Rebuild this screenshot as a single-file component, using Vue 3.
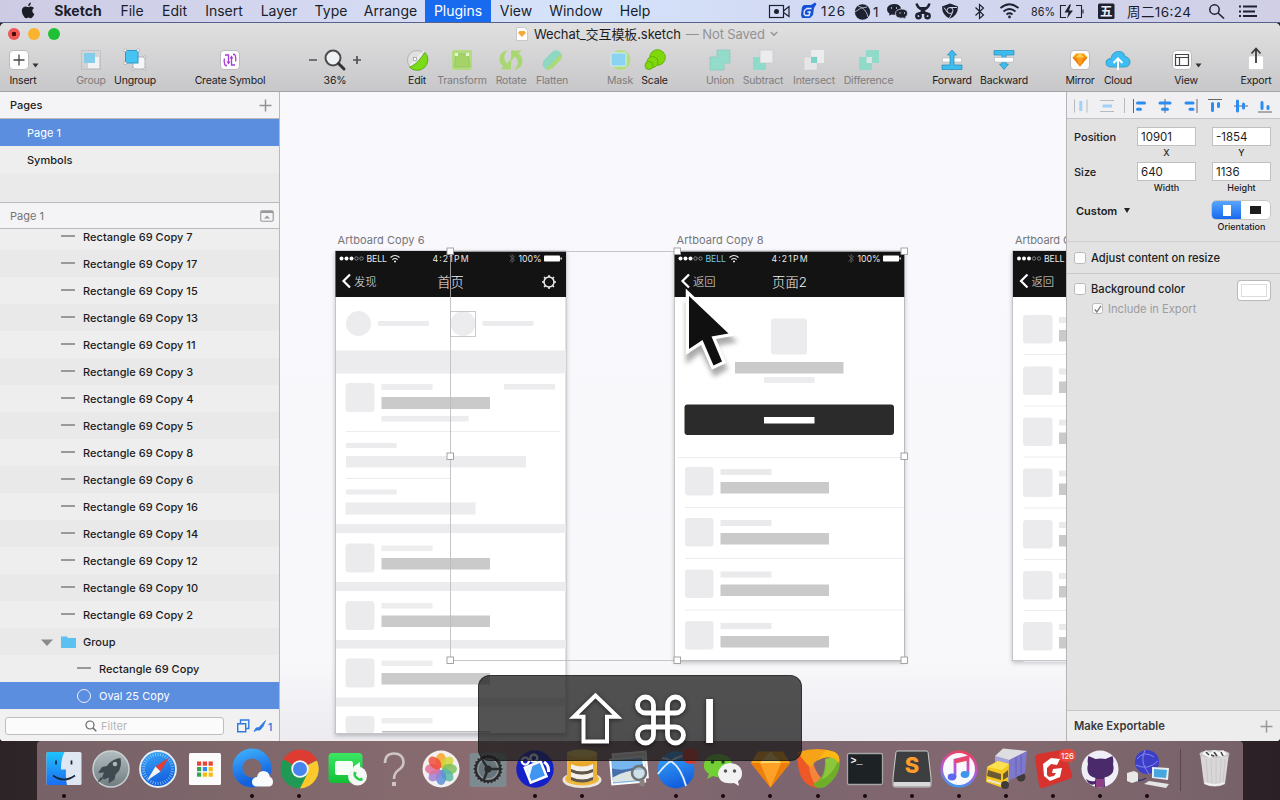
<script setup>
const menus = ['Sketch', 'File', 'Edit', 'Insert', 'Layer', 'Type', 'Arrange', 'Plugins', 'View', 'Window', 'Help']

const tile = '<rect x="5.5" y="5.5" width="19" height="19" rx="3.5" fill="#fdfdfd" stroke="#bcbcbe"/>'
const tools = [
  { label: 'Insert', icon: `<g transform="translate(-4 0)">${tile}<path d="M15 9.5v11M9.5 15h11" stroke="#444" stroke-width="1.3"/></g><path d="M24.500 18.500h6l-3 4z" fill="#333"/>` },
  {},
  { label: 'Group', dim: true, icon: '<rect x="5.500" y="5.500" width="19" height="19" fill="none" stroke="#b9b9bd" stroke-dasharray="2 1"/><rect x="12" y="12" width="11" height="11" fill="#f2f2f4"/><rect x="8" y="8" width="11" height="10" fill="#84cdea"/>' },
  { label: 'Ungroup', icon: '<rect x="13" y="12" width="12" height="12" fill="#f6f6f8" stroke="#b4b4b8"/><rect x="5.500" y="5.500" width="12.500" height="12.500" fill="#45c4f4" stroke="#2f99c9"/><path d="M4 4h2.500v2.500H4zM17 4h2.500v2.500H17zM4 17h2.500v2.500H4zM24 11h2v2h-2zM24 23h2v2h-2zM12 23h2v2h-2z" fill="#fff" stroke="#999" stroke-width=".5"/>' },
  {},
  { label: 'Create Symbol', icon: `${tile}<path d="M10 10h3.500v8M12 20.500h-1.500c-1.500-1-1.500-6-1-7M20 20h-3.500v-8M18 9.500h1.500c1.500 1 1.500 6 1 7" fill="none" stroke="#a53bd8" stroke-width="1.300"/><path d="M11.500 16.500h4l-2 3zM14.500 13.500h4l-2-3z" fill="#a53bd8"/>` },
  {},
  { label: '36%', icon: '<circle cx="13" cy="13" r="7.500" fill="#eef2f5" stroke="#4b4b4d" stroke-width="2"/><path d="M18.500 18.500l5.500 5.500" stroke="#333" stroke-width="3" stroke-linecap="round"/><path d="M-11 15h8M33 15h8M37 11v8" stroke="#505052" stroke-width="1.700"/>' },
  {},
  { label: 'Edit', icon: '<circle cx="15" cy="15" r="9.500" fill="#e0e0e0" stroke="#aaa" stroke-width=".8"/><path d="M23 7.500A10 10 0 0 1 7.500 22C14.500 20 18 14 23 7.500z" fill="#79dc17" stroke="#4aa510" stroke-width=".8"/><path d="M8 21L22 6" stroke="#fff" stroke-width="1"/><rect x="11.500" y="12.500" width="3" height="3" fill="#fff" stroke="#888" stroke-width=".6"/>' },
  { label: 'Transform', dim: true, icon: '<rect x="5" y="5" width="20" height="20" rx="2" fill="#b3dc81"/><path d="M9 9l-2 13h16L21 9z" fill="#a4d467" stroke="#98c966"/><path d="M8 8h3v3H8zM19 8h3v3h-3z" fill="#e7f5d5"/>' },
  { label: 'Rotate', dim: true, icon: '<path d="M12 5Q3 7 3.500 15q.5 4 4 6.500l-3 3H15V14l-4 4.500Q5 12 12 5zM18 25q9-2 8.500-10-.5-4-4-6.500l3-3H15V16l4-4.500Q25 18 18 25z" fill="#a9d873"/>' },
  { label: 'Flatten', dim: true, icon: '<path d="M7 15L16 6q4-2 7 1t1 7l-9 9q-4 3-7.500 0T7 15z" fill="#8fd7c3"/><path d="M24 9q2 3-.5 6l-8.500 8.500q-4 2-6 .5L24 9z" fill="#acda73"/>' },
  {},
  { label: 'Mask', dim: true, icon: '<circle cx="15.500" cy="15" r="10" fill="#b2dd80"/><rect x="6" y="8" width="15" height="13" rx="1" fill="#8ad3f2" stroke="#d8edf5"/>' },
  { label: 'Scale', icon: '<g fill="#80d80b" stroke="#5fb30b" stroke-width="1"><circle cx="17.500" cy="12.500" r="7.800"/><circle cx="12.500" cy="17" r="5.500"/><circle cx="9" cy="20.500" r="4"/></g>' },
  {},
  { label: 'Union', dim: true, icon: '<path d="M12 5h13v13h-6v7H5V12h7z" fill="#93dccb" stroke="#85c9ba" stroke-width=".7"/>' },
  { label: 'Subtract', dim: true, icon: '<rect x="12" y="5" width="13" height="13" fill="#ececee" stroke="#cfcfcf"/><path d="M5 12h7v6h6v7H5z" fill="#8edacb"/>' },
  { label: 'Intersect', dim: true, icon: '<rect x="12" y="5" width="13" height="13" fill="#ececee"/><rect x="5" y="12" width="13" height="13" fill="#e6e6e9" stroke="#ccc" stroke-width=".5"/><rect x="12" y="12" width="6" height="6" fill="#7cd2c4"/>' },
  { label: 'Difference', dim: true, icon: '<path d="M12 5h13v13h-7v7H5V12h7z" fill="#91dac9"/><rect x="12.500" y="12" width="5.500" height="6" fill="#dce5e3"/>' },
  {},
  { label: 'Forward', icon: '<rect x="5.500" y="13" width="19" height="4" fill="#fff" stroke="#aaa" stroke-width=".5"/><path d="M15 5l4.500 5H17v10h8v4.500H5V20h8V10h-2.500z" fill="#3cbdf0" stroke="#2789b4" stroke-width=".7"/>' },
  { label: 'Backward', icon: '<path d="M5 5.500h20v4.500h-8v9h2.500L15 24.500 10.500 19H13v-9H5z" fill="#3cbdf0" stroke="#2789b4" stroke-width=".7"/><rect x="5.500" y="12.500" width="19" height="4.500" fill="#fff" stroke="#aaa" stroke-width=".5"/>' },
  {},
  { label: 'Mirror', icon: `${tile}<path d="M11 8.500h8l3.500 4L15 21.500 7.500 12.500z" fill="#f7a414"/><path d="M7.500 12.500h15L15 21.500z" fill="#ea7b09"/><path d="M11 12.500h8L15 21.500z" fill="#fb9b1b"/><path d="M15 8.500l4 4h-8z" fill="#ffd14f"/>` },
  { label: 'Cloud', icon: '<path d="M8 22q-5 0-5-4.200T8 13.500q1-6.500 7-7T22 11.500q5 1 5 5.500T22 22z" fill="#3dbdf1" stroke="#2b94c2" stroke-width=".8"/><path d="M15 25V14M10.500 18L15 13.500l4.500 4.500" fill="none" stroke="#fff" stroke-width="2"/>' },
  {},
  { label: 'View', icon: `<g transform="translate(-4 0)">${tile}<path d="M8.500 9.500h13v11h-13zM8.500 12.500h13M12.500 12.500v8" fill="none" stroke="#444" stroke-width="1.200"/></g><path d="M24.500 18.500h6l-3 4z" fill="#333"/>` },
  {},
  { label: 'Export', icon: '<path d="M7.500 11h15v13.500h-15z" fill="#fff" stroke="#c4c4c4" stroke-width=".6"/><path d="M15 18V4M10.500 8.500L15 3.500l4.500 5" fill="none" stroke="#3b3b3d" stroke-width="1.800"/>' },
]

const layers = [7, 17, 15, 13, 11, 3, 4, 5, 8, 6, 16, 14, 12, 10, 2].map(n => `Rectangle 69 Copy ${n}`)

const petals = ['#f6a623', '#d2d63a', '#7cc15a', '#58b9a3', '#5a8fdc', '#a07fd0', '#e2709a', '#ee4f3b']
  .map((c, i) => `<ellipse cx="20" cy="11.500" rx="5.200" ry="7.500" fill="${c}" fill-opacity=".85" transform="rotate(${i * 45} 20 20)"/>`).join('')
const teeth = Array.from({ length: 24 }, (_, i) => `<path d="M20 5.500v3" stroke="#292b2d" stroke-width="1.800" transform="rotate(${i * 15} 20 20)"/>`).join('')
const ticks = Array.from({ length: 36 }, (_, i) => `<path d="M20 4v3" stroke="#a9dcf8" stroke-width=".6" transform="rotate(${i * 10} 20 20)"/>`).join('')
const dots9 = ['#e94335', '#e94335', '#e94335', '#35a552', '#2d8ced', '#f9bb0c', '#35a552', '#f9bb0c', '#f9bb0c']
  .map((c, i) => `<rect x="${12 + (i % 3) * 5.800}" y="${12.500 + Math.floor(i / 3) * 5.500}" width="4.200" height="4.200" fill="${c}"/>`).join('')

const dock = [
  { run: true, art: '<rect x="2.500" y="3" width="35" height="33" rx="1.500" fill="#dfe7f2"/><path d="M4 3h16.500c-3 6-3.500 12-3.500 17.500h5c-.3 6 0 11 1 15.500H4q-1.500 0-1.500-1.500v-30Q2.500 3 4 3z" fill="url(#gFinder)"/><path d="M12 11.500v4M27.500 11.500v4" stroke="#14243a" stroke-width="1.700"/><path d="M9 26.500q11 8 22 0" fill="none" stroke="#14243a" stroke-width="1.600"/>' },
  { art: '<circle cx="20" cy="20" r="18" fill="url(#gSteel)" stroke="#c7d0d2" stroke-width="1.500"/><path d="M29.500 9q-9 1-13.500 8l-5 1-4 6 6-.5-2 5 2 2 5-2-.5 6 6-4 1-5q7-5 5-16.500z" fill="#3f4a50"/><circle cx="24" cy="15" r="2.300" fill="#aab5b7"/><path d="M10 28l-4 6 6-4" fill="#3f4a50"/>' },
  { art: `<circle cx="20" cy="20" r="18" fill="url(#gBlue)" stroke="#e7eef3" stroke-width="1.800"/>${ticks}<path d="M31 8.500L22.500 22.500 17.500 17.500z" fill="#e43d35"/><path d="M9 31.500l8.500-14 5 5z" fill="#f4f4f4"/>` },
  { art: `<rect x="4" y="4" width="32" height="32" rx="1.500" fill="#fbfbfb"/>${dots9}` },
  { run: true, art: '<circle cx="20" cy="19" r="14.500" fill="none" stroke="url(#gBlue)" stroke-width="10"/><path d="M25 37.500q-5 0-5-4.500t5-5q1-6 6.500-6t6.500 6q3 1 3 5t-4 4.500z" fill="#f8fafc"/>' },
  { run: true, art: '<path d="M20 20L3.200 10.300A19.400 19.400 0 0 1 36.800 10.300z" fill="#df3c31"/><path d="M20 20L3.200 10.300A19.400 19.400 0 0 0 20 39.400l8-14z" fill="#1f9a54"/><path d="M20 20L36.800 11.500A19.400 19.400 0 0 1 20 39.400l7.500-15z" fill="#fcc92d"/><path d="M20 11.500h17.400L36.800 10.300H20z" fill="#df3c31"/><circle cx="20" cy="20" r="8.700" fill="#f5f5f5"/><circle cx="20" cy="20" r="7" fill="#4685ed"/>' },
  { art: '<rect x="1.500" y="4" width="34" height="30" rx="4" fill="url(#gGreen)"/><rect x="8" y="12" width="18" height="14" rx="2.500" fill="#f6fff7"/><path d="M26 18l7-5v9z" fill="#f6fff7"/><circle cx="30.500" cy="27" r="9.500" fill="#f5f7f5"/><path d="M27 22.500l2.500 1-.5 3 3.500 3 2.500-1 1 2.500q-3 2.500-7-1t-2-7.500z" fill="#28cf4c"/>' },
  { art: '<path d="M11 14q0-9.500 9-9.500t9.500 8.500q0 5-5 8-4.500 3-4.500 9" fill="none" stroke="#ccc4c6" stroke-width="2.600"/><rect x="18" y="33" width="4" height="4" fill="#ccc4c6"/>' },
  { art: `<circle cx="20" cy="20" r="18.500" fill="#f3f0ef"/>${petals}` },
  { art: `<rect x="1.500" y="4" width="37" height="34" rx="2" fill="#7d8a90"/><circle cx="20" cy="20" r="15" fill="#8e9699"/>${teeth}<circle cx="20" cy="20" r="12.300" fill="none" stroke="#292b2d" stroke-width="2.500"/><circle cx="20" cy="20" r="9.500" fill="#67747a"/><circle cx="20" cy="20" r="3.500" fill="#292b2d"/><path d="M20 20L14 10M20 20l-4 10.500M20 20h12" stroke="#292b2d" stroke-width="2.400"/>` },
  { run: true, art: '<circle cx="20" cy="20" r="18.700" fill="#1420c8"/><g transform="rotate(-22 20 20)"><rect x="11" y="15" width="17" height="16" fill="#3f95ef" stroke="#fff" stroke-width="2.500"/><path d="M12 16h7l-7 9z" fill="#eef6ff"/><circle cx="14" cy="9" r="3.500" fill="#1420c8" stroke="#fff" stroke-width="2.300"/><circle cx="23" cy="9.500" r="3.500" fill="#1420c8" stroke="#fff" stroke-width="2.300"/></g><path d="M29 13q5 3 4.500 10" stroke="#fff" stroke-width="3" fill="none"/>' },
  { run: true, art: '<ellipse cx="20" cy="31" rx="19.500" ry="8" fill="#e9e5df"/><ellipse cx="20" cy="30" rx="17" ry="6.500" fill="#f1b93d"/><path d="M5 4h30v27q-15 8-30 0z" fill="#eeb43a"/><path d="M7 11q13 5 26 0v5q-13 5-26 0z" fill="#e9a92c"/><path d="M9 15q11 5 22 0v5q-11 5-22 0zM9 23q11 5 22 0v5q-11 5-22 0z" fill="#f3f1ee"/><path d="M9 20q11 5 22 0v3q-11 5-22 0zM9 28q11 5 22 0v3q-11 5-22 0z" fill="#5c5751"/><ellipse cx="20" cy="4.500" rx="15" ry="4" fill="#f8d162"/>' },
  { art: '<g transform="rotate(-5 20 20)"><rect x="5" y="4" width="33" height="26" fill="#ddd" stroke="#fff" stroke-width="2"/><rect x="2" y="9" width="33" height="25" fill="#77b6ee" stroke="#fff" stroke-width="2"/><path d="M3 18q14 5 31-2v16H3z" fill="#4a6ea8"/><path d="M3 27q15-7 31-5v10H3z" fill="#dce3e3"/></g><circle cx="30" cy="24" r="7" fill="#c7dfea" fill-opacity=".7" stroke="#707477" stroke-width="2.500"/><path d="M33 31v6" stroke="#8b8380" stroke-width="5"/>' },
  { run: true, art: '<circle cx="20" cy="21" r="18.500" fill="url(#gBlue)"/><path d="M6 9q17 2 24 28M2 25q12-17 29-19" fill="none" stroke="#e4efff" stroke-width="1.800"/><circle cx="34.500" cy="7" r="8" fill="#d63c32"/>' },
  { run: true, art: '<path d="M15 5q13 0 14 11 0 12-14 12-3 0-5-1l-6 3 2-5q-6-4-5-10Q3 5 15 5z" fill="#72d034"/><circle cx="9.500" cy="13" r="1.800" fill="#27491c"/><circle cx="20" cy="13" r="1.800" fill="#27491c"/><path d="M27 14q12 1 12 11 0 5-4 7l1 5-5-3q-15 2-16-9 1-10 12-11z" fill="#f2f2f2"/><circle cx="22.500" cy="22" r="1.700" fill="#555"/><circle cx="31.500" cy="22" r="1.700" fill="#555"/>' },
  { run: true, art: '<path d="M8 2.500h25L40 14 20.500 38.500 1 14z" fill="#f9a51b"/><path d="M1 14h39L20.500 38.500z" fill="#ef7d0b"/><path d="M10 14h21L20.500 38.500z" fill="#fda227"/><path d="M20.500 2.500L31 14H10z" fill="#ffd86b"/>' },
  { run: true, art: '<path d="M20 39Q7 38 2 25-2 12 0 3q9 8 15 10 2 10 9 17z" fill="#ee5826"/><path d="M20 39q-9-10-9-24l4-2q2 10 9 17z" fill="#f5853a"/><path d="M41 7q4 18-14 31-8 3-12-3Q28 29 27 10z" fill="#6fae2a"/><path d="M41 7q-3 17-18 24 6-9 4-21z" fill="#8cc63a"/><path d="M0 3q20-6 37 0 5 3 4 11-5-8-16-5-10 3-12 10Q5 12 0 3z" fill="#f6a318"/><path d="M28 1q8 1 11 4 3 3 2 9-4-6-12-6-8 1-11 6z" fill="#fdb813"/>' },
  { run: true, art: '<rect x="2.500" y="4.500" width="35" height="31" rx="1.500" fill="#1d2224" stroke="#a5a5a5" stroke-width="1.300"/><text x="5.500" y="15" font-family="Liberation Mono, monospace" font-weight="700" font-size="10" fill="#f4f4f4">&gt;_</text>' },
  { run: true, art: '<path d="M4 3q0-1 2-1h28q2 0 2 1l3 26v7q0 2-2 2H3q-2 0-2-2v-7z" fill="#3d3e40" stroke="#cbcbcb"/><path d="M1.500 33h37v3q0 1.500-2 1.500H3.500q-2 0-2-1.500z" fill="#d9d9d9"/><text x="20" y="24" text-anchor="middle" font-family="Inter, sans-serif" font-weight="800" font-size="22" fill="#fb9c2c">S</text>' },
  { run: true, art: '<circle cx="20" cy="20" r="17.300" fill="#f9f8fb" stroke="url(#gTunes)" stroke-width="2.600"/><path d="M16 28V11l13-3v17" stroke="url(#gTunes)" stroke-width="2.800" fill="none"/><path d="M16 11l13-3v3.500L16 14.500z" fill="#ee4766"/><ellipse cx="13" cy="28" rx="4.300" ry="3.400" fill="#5c68ee"/><ellipse cx="26" cy="25.500" rx="4.300" ry="3.400" fill="#3b96ee"/>' },
  { run: true, art: '<circle cx="35" cy="28" r="4.500" fill="#3f3b3a"/><path d="M9 7L23 11v22L9 26z" fill="#a3a2dd"/><path d="M23 11L41 2 39 24 22 32z" fill="#7e79cf"/><path d="M9 7L17-.500 41 2 23 11z" fill="#dedee2"/><path d="M30 8v19M35 6v18" stroke="#6661b4" stroke-width="1"/><path d="M1 18l11-6 11 3-1 21-5 3-17-6z" fill="#f4c81f"/><path d="M1 18l11-6 11 3-7 6z" fill="#fbe052"/><path d="M2 21l13 4v6L1 27zM17 25l5-4v7l-5 3z" fill="#6c5a34"/><path d="M1 31l14 4" stroke="#e8e4d8" stroke-width="2"/><circle cx="19" cy="36" r="4" fill="#3f3b3a"/>' },
  { run: true, art: '<path d="M2 9q0-3 3-4l23-4q3 0 4 3l7 21q1 4-3 5L10 39q-3 1-4-3z" fill="#d8322e"/><path d="M27 10l-9-1-8 6 1 12 6 5 10-4 2-9-9 1-1 4h4l-2 3-5 1-2-2v-7l4-4 6 1z" fill="#fff"/><rect x="26" y="0" width="17" height="13" rx="6.500" fill="#e8473d"/><text x="34.500" y="9.500" text-anchor="middle" font-family="Inter, sans-serif" font-size="8" fill="#fff">126</text>' },
  { run: true, art: '<circle cx="20" cy="20" r="18.500" fill="#f0eef6"/><path d="M8.500 7l7 3q5-1 10 0l7-3q1.500 4 .5 8 3 11-8.500 13.500l.5 9.500h-10V35q-6 2.500-9-5 4 3 9 2l.5-3Q5 27 8 15q-1-4 .5-8z" fill="#4b2a6b"/><path d="M16 30h8v8.500h-8z" fill="#8d3f86"/>' },
  { run: true, art: '<circle cx="20" cy="13" r="12" fill="#3e3fc8"/><path d="M10 10q7-9 17-2M9 16q12 6 22-4M18 1q-6 12 4 24" stroke="#8588ee" stroke-width="1" fill="none"/><path d="M7 29q5 5 12 0" stroke="#333577" stroke-width="1.500" fill="none"/><path d="M0 24l7-2 4 2v8l-6 2-5-2z" fill="#e8e8e8"/><path d="M25 18l17 1-1 12-16-2z" fill="#e7eef2"/><path d="M27 20l13 1-1 8-12-1z" fill="#46a6dd"/><path d="M17 35l5-3 20 3-3 4z" fill="#e5e5e5"/>' },
]

const rows1 = [543.5, 601, 658.5, 716]
const rows2 = [467, 518, 569.5, 621]
const rows3 = [315, 366.5, 417.500, 468.500, 520, 571, 622]
const handles = [[450, 251], [677, 251], [904, 251], [450, 456], [904, 456], [450, 660], [677, 660], [904, 660]]
const heads = [
  { x: 0, name: 'Artboard Copy 6', nameWidth: 87, width: 230.5, back: '发现', title: '首页', carrier: '#e8e8e8', gear: true },
  { x: 339, name: 'Artboard Copy 8', nameWidth: 87, width: 230.5, back: '返回', title: '页面2', carrier: '#6fc3ea' },
  { x: 677.500, name: 'Artboard C', nameWidth: 56, width: 54, back: '返回', carrier: '#e8e8e8' },
]
</script>

<template>
  <div class="desktop">
    <svg class="defs" width="0" height="0">
      <defs>
        <linearGradient id="gFinder" x1="0" y1="0" x2="0" y2="1"><stop offset="0" stop-color="#1fc3fb" /><stop offset="1" stop-color="#1b6df0" /></linearGradient>
        <linearGradient id="gSteel" x1="0" y1="0" x2="0" y2="1"><stop offset="0" stop-color="#b3bec1" /><stop offset="1" stop-color="#707c80" /></linearGradient>
        <linearGradient id="gBlue" x1="0" y1="0" x2="0.3" y2="1"><stop offset="0" stop-color="#3aa9fa" /><stop offset="1" stop-color="#1360dd" /></linearGradient>
        <linearGradient id="gGreen" x1="0" y1="0" x2="0" y2="1"><stop offset="0" stop-color="#3be763" /><stop offset="1" stop-color="#12bf34" /></linearGradient>
        <linearGradient id="gTunes" gradientUnits="userSpaceOnUse" x1="24" y1="2" x2="16" y2="38"><stop offset="0" stop-color="#f0405c" /><stop offset=".5" stop-color="#bb55d3" /><stop offset="1" stop-color="#3b9cf3" /></linearGradient>
      </defs>
    </svg>

    <header class="menubar">
      <div class="menus">
        <span class="apple"><svg width="14" height="17" viewBox="0 0 14 17"><path d="M9.800.5Q10 3.500 7.200 4.300 7 1.500 9.800.5zM7.200 5.200q1-.7 2.700-.8 2 .1 3.100 1.600-1.800 1.200-1.700 3 .1 2.200 2 3-.7 2-2.200 3.600-1 .9-2.300.3-1.400-.6-2.800 0-1.400.6-2.400-.4Q.7 12.200.8 8.800 1.200 5 4.300 4.500q1.300 0 2.900.7z" fill="#1a1d26" /></svg></span>
        <span v-for="m in menus" :key="m" :class="{ bold: m === 'Sketch', active: m === 'Plugins' }">{{ m }}</span>
      </div>
      <svg class="status" width="520" height="23" viewBox="760 0 520 23">
        <g fill="none" stroke="#1d2130" stroke-width="1.200">
          <rect x="769.500" y="5.500" width="14" height="12" /><path d="M783.500 11l5.500-4.500v10l-5.500-4" />
          <path d="M975.500 7.500l8 7.500-4 3.500V4.500l4 3.500-8 7.500" />
          <path d="M1000.500 8q9-7.500 18 0M1003.500 11.500q6-5 12 0M1006.500 14.500q3-2.500 6 0" stroke-width="1.700" /><circle cx="1009.500" cy="17" r=".8" />
          <path d="M1066 5.500h-5.500v12h5.500M1076 5.500h5.500v12h-5.500M1083 9.500v4" stroke-width="1.100" />
          <circle cx="1214.500" cy="9.500" r="4.700" stroke-width="1.500" /><path d="M1218 13l6 5.500" stroke-width="1.600" />
          <path d="M1243 6.500h14M1243 11.500h12M1243 16h14" stroke-width="2" /><path d="M1239 6.500h2M1239 11.500h2M1239 16h2" stroke-width="2" />
        </g>
        <g fill="#1d2130">
          <circle cx="776.500" cy="11.500" r="2.500" />
          <path d="M804 5h7l4-2.500 1.500 1.500-2.500 4-1 7-3 3h-8l-1-3 1-8z" fill="#1251d6" /><path d="M811.500 8.500h-4.500l-2.500 2-.5 3.500 1.500 1.500h3.500l1-3.500h-2.500" fill="none" stroke="#e3e9fb" stroke-width="1.400" />
          <circle cx="862.500" cy="12" r="7.700" /><path d="M858 6q8 2 10 11M855 12q5-5 12-5" stroke="#b8bfda" stroke-width=".9" fill="none" />
          <path d="M894 4q7 0 7 5.500l-5 5q-2 .5-4 0l-3 1 .5-2q-2.500-1.500-2.500-4 0-5 7-5.500z" /><path d="M901.500 9q6 0 6 4.500 0 2-2 3.500l.5 2-2.500-1q-8 1-8-4.500 0-4 6-4.500z" stroke="#ced3e9" stroke-width=".8" />
          <path d="M891 8h1M896 8h1M899.500 13h1M904 13h1" stroke="#ced3e9" stroke-width="1.300" />
          <path d="M1069.500 4.500l-5 8h4l-1.500 6 6-8h-4l2-6z" />
          <path d="M942 6.500l8-3 8 3q0 9-8 12-8-3-8-12z" /><circle cx="950" cy="10.500" r="3" fill="none" stroke="#cfd3e8" stroke-width="1" />
          <path d="M950 7.500h7M947.500 12.500l-3.500-5M952.500 12.500l-3 5.500" stroke="#cfd3e8" stroke-width="1" />
          <rect x="1098" y="3.500" width="16.500" height="15.500" rx="1.500" />
        </g>
        <g fill="none" stroke="#1d2130" stroke-width="2.400"><path d="M916.500 3.500q1 4 5 6l6 5.500M929.500 3.500q-1 4-5 6l-6 5.500" /><path d="M920 8h6M918.500 13h9" stroke-width="2" /><circle cx="918.500" cy="16" r="2.200" /><circle cx="927.500" cy="16" r="2.200" /></g>
        <g class="status-text">
          <text x="821" y="16" textLength="24">126</text><text x="873" y="17">1</text>
          <text x="1031" y="15.500" font-size="12" textLength="24" lengthAdjust="spacingAndGlyphs">86%</text>
          <text x="1100" y="16" font-size="12.500" class="inv">五</text>
          <text x="1127" y="16.500" textLength="64">周二16:24</text>
        </g>
      </svg>
    </header>

    <main class="window">
      <div class="chrome">
        <div class="titlebar">
          <i class="light red"></i><i class="light amber"></i><i class="light green"></i>
          <div class="title">
            <svg width="12" height="14" viewBox="0 0 12 14"><path d="M.5.500h8l3 3v10H.5z" fill="#fff" stroke="#c9c9c9" /><path d="M3.500 4h5L10 6 6 10 2 6z" fill="#f6a93b" /></svg>
            <span class="file">Wechat_交互模板.sketch</span><span class="saved">— Not Saved</span>
            <svg width="8" height="6" viewBox="0 0 8 6"><path d="M.8 1L4 4.300 7.200 1" fill="none" stroke="#929294" stroke-width="1.300" /></svg>
          </div>
        </div>
        <div class="toolbar">
          <div v-for="(t, i) in tools" :key="i" class="tool" :class="{ dim: t.dim }">
            <template v-if="t.label">
              <svg width="30" height="30" viewBox="0 0 30 30" overflow="visible" v-html="t.icon" />
              <span>{{ t.label }}</span>
            </template>
          </div>
        </div>
      </div>

      <div class="body">
        <aside class="sidebar">
          <div class="head pages">Pages<svg width="13" height="13" viewBox="0 0 13 13"><path d="M6.500.5v12M.5 6.500h12" stroke="#929292" stroke-width="1.500" /></svg></div>
          <div class="page selected">Page 1</div>
          <div class="page">Symbols</div>
          <div class="filler"></div>
          <div class="head sub">Page 1<svg width="14" height="12" viewBox="0 0 14 12"><rect x=".7" y=".7" width="12.500" height="10.500" rx="1.500" fill="none" stroke="#999" stroke-width="1.100" /><path d="M1 2h12" stroke="#999" stroke-width="2" /><path d="M4 8.500h6L7 5.500z" fill="#999" /></svg></div>
          <div class="layers">
            <div class="layer-stack">
              <div v-for="l in layers" :key="l" class="layer"><i class="bar"></i>{{ l }}</div>
              <div class="layer group"><svg width="38" height="14" viewBox="0 0 38 14"><path d="M1 4.500h12L7 11z" fill="#8b8b8b" /><path d="M21 1.500h6l1 1.500h8v10H21z" fill="#5cc0f0" /></svg>Group</div>
              <div class="layer deep"><i class="bar"></i>Rectangle 69 Copy</div>
              <div class="layer deep selected"><i class="ring"></i>Oval 25 Copy</div>
            </div>
          </div>
          <div class="filter">
            <div class="field"><svg width="12" height="12" viewBox="0 0 12 12"><circle cx="5" cy="5" r="4" fill="none" stroke="#666" stroke-width="1.200" /><path d="M8 8l3.300 3.300" stroke="#666" stroke-width="1.400" /></svg>Filter</div>
            <svg class="flags" width="38" height="14" viewBox="0 0 38 14"><path d="M.7 4.700h8v8h-8zM3.500 4V1h8.300v8.500H9.300" fill="none" stroke="#2f7ae0" stroke-width="1.400" /><path d="M17 12.500l2-3.500 3-.5L28.500 1.500 26 7.500l-3 3.500h-3z" fill="#2f7ae0" stroke="#2f7ae0" stroke-width=".8" /><text x="31" y="11.500">1</text></svg>
          </div>
        </aside>

        <svg class="canvas" width="787" height="648" viewBox="280 92 787 648">
          <defs>
            <linearGradient id="gFade" x1="0" y1="0" x2="0" y2="1"><stop offset="0" stop-color="#f9f9fd" /><stop offset=".88" stop-color="#f8f8fb" /><stop offset="1" stop-color="#ebebf0" /></linearGradient>
            <filter id="fSoft" x="-20%" y="-20%" width="150%" height="150%"><feGaussianBlur stdDeviation="2.500" /></filter>
          </defs>
          <rect x="280" y="92" width="787" height="648" fill="url(#gFade)" />
          <g class="board">
            <rect x="335.500" y="251" width="230.500" height="482.500" />
            <rect x="674.500" y="251" width="230" height="409.500" />
            <rect x="1012.500" y="251" width="70" height="409.500" />
          </g>

          <g fill="#ececee">
            <circle cx="358.500" cy="323.500" r="12.500" /><circle cx="463" cy="323.500" r="12.500" />
            <path d="M378 321h51v5h-51zM482.500 321h51v5h-51zM336 350.500h230v23H336zM381.500 384h51v6h-51zM504 384h51v5.500h-51zM381.500 416h87v5.500h-87zM346 443h50.500v5H346zM346 456h180v11.500H346zM346 489.500h50.500v5H346zM345.500 502.500h130v12h-130z" />
            <path d="M336 524h230v9H336zM336 582h230v9H336zM336 640h230v8.500H336zM336 697.500h230v9H336z" />
            <rect x="345.500" y="383" width="29" height="29" rx="3.500" />
            <rect x="346" y="431" width="214" height="1" /><rect x="346" y="478" width="104" height="1" />
            <rect x="382" y="731" width="108" height="1.500" fill="#bbb" />
            <rect x="771" y="318.500" width="36" height="36" rx="3" /><rect x="764" y="377" width="50.500" height="6" />
            <rect x="678" y="457" width="226" height="1" />
          </g>
          <g v-for="(y, i) in rows1" :key="'a' + y">
            <rect x="345.500" :y="y" width="29" :height="i === 3 ? 17 : 29" rx="3.500" fill="#ebebed" /><rect x="381.500" :y="y + 2" width="51" height="5.500" fill="#ededed" />
            <rect v-if="i < 3" x="381.500" :y="y + 14.500" width="108.500" height="11.500" fill="#cacaca" />
          </g>
          <g v-for="(y, i) in rows2" :key="'b' + y">
            <rect x="685" :y="y" width="28.500" height="28.500" rx="3" fill="#ebebed" /><rect x="720.500" :y="y + 2" width="51" height="6" fill="#eaeaec" />
            <rect x="720.500" :y="y + 15" width="108.500" height="11.500" fill="#cacaca" /><rect v-if="i < 3" x="685" :y="y + 40" width="219" height="1" fill="#ececf2" />
          </g>
          <g v-for="y in rows3" :key="'c' + y">
            <rect x="1023" :y="y" width="29.500" height="28.500" rx="3" fill="#ebebed" /><rect x="1059" :y="y + 2" width="20" height="6" fill="#eaeaec" />
            <rect x="1059" :y="y + 15" width="20" height="11.500" fill="#cacaca" /><rect x="1023.500" :y="y + 39" width="60" height="1" fill="#ececf0" />
          </g>
          <rect x="381.500" y="397" width="108.500" height="12" fill="#cacaca" />
          <rect x="735" y="362" width="108.500" height="11.500" fill="#cacaca" />
          <rect x="684.500" y="404.500" width="209.500" height="30.500" rx="3" fill="#2b2b2b" /><rect x="764" y="417" width="50.500" height="6.500" fill="#fff" />

          <g v-for="h in heads" :key="h.x" :transform="`translate(${h.x} 0)`">
            <text x="337.500" y="243.800" class="board-name" :textLength="h.nameWidth">{{ h.name }}</text>
            <rect x="335.500" y="251" :width="h.width" height="46" fill="#131313" />
            <g fill="#fff"><circle cx="341.500" cy="258.500" r="2" /><circle cx="346.500" cy="258.500" r="2" /><circle cx="351.500" cy="258.500" r="2" /></g>
            <g fill="none" stroke="#999" stroke-width=".8"><circle cx="356.500" cy="258.500" r="1.700" /><circle cx="361.500" cy="258.500" r="1.700" /></g>
            <text x="366.500" y="262" class="st" :fill="h.carrier" textLength="20.500">BELL</text>
            <path d="M350 274.500l-6.500 6.500 6.500 6.500" fill="none" stroke="#fff" stroke-width="2.200" />
            <text x="354" y="285.500" class="thin" font-size="11.300" fill="#e4e4e4">{{ h.back }}</text>
            <template v-if="h.title">
              <path d="M390.500 257.500q4.500-4 9 0M392.300 259.700q2.700-2.400 5.400 0" fill="none" stroke="#eee" stroke-width="1.100" /><circle cx="395" cy="261.500" r="1" fill="#eee" />
              <text x="432.500" y="262" class="st" fill="#e8e8e8" textLength="36">4:21PM</text>
              <path d="M509.500 255.500l5 4.500-2.500 2.500v-8l2.500 2.500-5 4.500" fill="none" stroke="#666" stroke-width=".8" />
              <text x="518.500" y="262" class="st" fill="#e8e8e8" textLength="23">100%</text>
              <rect x="544" y="255.500" width="16" height="6" rx=".8" fill="#fff" /><rect x="560.500" y="257.500" width="1.300" height="2" fill="#fff" />
              <text x="450.500" y="286.500" class="thin" font-size="13.300" fill="#f2f2f2" text-anchor="middle">{{ h.title }}</text>
            </template>
            <g v-if="h.gear" fill="none" stroke="#eee" stroke-width="1.500"><circle cx="549" cy="282" r="5" /><path d="M549 275v2M549 287v2M542 282h2M554 282h2M544 277l1.500 1.500M552.500 285.500l1.500 1.500M544 287l1.500-1.500M552.500 278.500l1.500-1.500" /></g>
          </g>

          <rect x="450.500" y="311.500" width="25" height="25" fill="none" stroke="#bdbdbd" stroke-width=".8" />
          <rect x="450.500" y="251.500" width="454" height="409" fill="none" stroke="#b9b9bd" stroke-width=".8" />
          <rect v-for="p in handles" :key="p.join()" :x="p[0] - 3" :y="p[1] - 3" width="6.500" height="6.500" fill="#fff" stroke="#9b9b9b" stroke-width=".9" />

          <path d="M686 300L738 342 716 346 728 369 714 377 701 352 686 364z" fill="#000" opacity=".33" filter="url(#fSoft)" />
          <path d="M689 296L728.500 333.500 711.500 336.500 722 361.500 713.500 365.500 702.500 340 689 349z" fill="#fff" stroke="#fff" stroke-width="6.500" stroke-linejoin="miter" />
          <path d="M689 296L728.500 333.500 711.500 336.500 722 361.500 713.500 365.500 702.500 340 689 349z" fill="#101010" />
        </svg>

        <aside class="inspector">
          <div class="align">
            <svg width="213" height="27" viewBox="1067 92 213 27">
              <g stroke="#b9b9bb" stroke-width="1"><path d="M1074.500 99.500v13M1087 99.500v13M1100 100.500h14M1100 111.500h14M1124.500 98v15" /></g>
              <g stroke="#666" stroke-width="1"><path d="M1133.500 99v14M1165 99v14M1197 99v14M1208 99.500h14M1234 106h14M1258 112h14" /></g>
              <g stroke="#a3d0f5" stroke-width="3"><path d="M1080.800 101v10M1102.500 106h9.500" /></g>
              <g stroke="#2b8cf3" stroke-width="3" stroke-linecap="round"><path d="M1137.500 103h7M1137.500 109.300h3M1160 103h10M1162.500 109.300h5M1186 103h7M1190 109.300h3M1212.500 103.500v7M1218.500 103.500v3M1237.500 101v10M1243.500 104v4M1262 102.500v6M1268 106.500v2" /></g>
            </svg>
          </div>
          <div class="grid">
            <span class="lab">Position</span><div class="cell"><b>10901</b><small>X</small></div><div class="cell"><b>-1854</b><small>Y</small></div>
            <span class="lab">Size</span><div class="cell"><b>640</b><small>Width</small></div><div class="cell"><b>1136</b><small>Height</small></div>
            <span class="lab custom">Custom <svg width="6" height="5" viewBox="0 0 6 5"><path d="M0 0h6L3 5z" fill="#222" /></svg></span>
            <div class="orient"><div class="seg"><i class="on"><u></u></i><i><u></u></i></div><small>Orientation</small></div>
          </div>
          <div class="opt first"><i class="check"></i>Adjust content on resize</div>
          <div class="opt second"><i class="check"></i>Background color<i class="swatch"></i></div>
          <div class="opt include"><i class="check"><svg width="8" height="8" viewBox="0 0 8 8"><path d="M.8 4.300l2 2.700L7 .8" fill="none" stroke="#777" stroke-width="1.300" /></svg></i>Include in Export</div>
          <div class="export">Make Exportable<svg width="13" height="13" viewBox="0 0 13 13"><path d="M6.500.5v12M.5 6.500h12" stroke="#999" stroke-width="1.500" /></svg></div>
        </aside>
      </div>
    </main>

    <footer class="dock-area">
      <div class="dock">
        <div v-for="(d, i) in dock" :key="i" class="app"><svg width="40" height="40" viewBox="0 0 40 40" overflow="visible" v-html="d.art" /><i v-if="d.run"></i></div>
        <div class="rule"></div>
        <div class="app trash"><svg width="40" height="40" viewBox="0 0 40 40"><path d="M6 4h29l-4 31q-10 5-21 0z" fill="#d9d7d8" /><path d="M12 10l2 25M17 10l1 26M22 10v26M27 10l-1 26M31 10l-2 25" stroke="#c6c2c4" stroke-width=".8" /><ellipse cx="20.500" cy="5" rx="15" ry="4" fill="#c9c7c8" /><path d="M8 5l4-4 4 3 4-3 5 2 4-2 4 4-5 3-7-2-5 3z" fill="#f7f7f7" /><path d="M12 3l3 3M20 3l3 4M27 3l2 4M17 6l3 1" stroke="#444" stroke-width="1.600" /><path d="M11 33q10 4 19 0v2q-10 4-19 0z" fill="#f1f1f1" /></svg></div>
      </div>
    </footer>

    <div class="hud">
      <svg width="324" height="86" viewBox="478 675 324 86">
        <g class="keys" fill="none" stroke="#fff">
          <path d="M595.500 695.500L573.800 716.800h9.700v24.700h23.500v-24.700h10.500z" stroke-width="4" />
          <path d="M653.500 712v23a8 8 0 1 1-8-8h30a8 8 0 1 1-8 8v-30a8 8 0 1 1 8 8h-30a8 8 0 1 1 8-8z" stroke-width="4.800" />
        </g>
        <text x="709.500" y="742.500" text-anchor="middle">I</text>
      </svg>
    </div>
  </div>
</template>

<style>
html, body { margin: 0; overflow: hidden; background: #2b2327; }
</style>

<style scoped>
.desktop { position: relative; width: 1280px; height: 800px; overflow: hidden; display: flex; flex-direction: column; background: linear-gradient(90deg, #2c2427, #4a3c40 50%, #2a2025); font-family: Inter, "Noto Sans CJK SC", sans-serif; color: #1c1c1e; }
.defs { position: absolute; }
i { font-style: normal; }
.menubar { height: 23px; flex: none; display: flex; justify-content: space-between; background: linear-gradient(90deg, #cdcbe3, #d5dcf4 32%, #d4e3fb 45%, #d3daf4 62%, #d0cfe6); border-bottom: 1px solid #56608d; box-sizing: border-box; }
.menus { display: grid; grid-template-columns: 45px 66px 42px 43px 56px 54px 50px 69px 66px 50px 70px 48px; font-size: 14px; line-height: 22px; text-align: center; color: #1a1d2a; }
.menus span { white-space: nowrap; }
.menus .apple { padding: 2px 0 0 10px; line-height: 0; }
.menus .bold { font-weight: 700; }
.menus .active { background: #186bef; color: #fff; }
.status-text { font-size: 13.500px; fill: #1a1d2a; }
.status-text .inv { fill: #e9ebf6; font-weight: 700; }

.window { height: 718px; flex: none; display: flex; flex-direction: column; border-radius: 5px 5px 4px 4px; overflow: hidden; background: #eee; }
.chrome { height: 69px; flex: none; box-sizing: border-box; background: linear-gradient(#e1e0e1, #c8c7c9); border-bottom: 1px solid #a5a4a6; }
.titlebar { height: 22px; display: flex; align-items: center; padding-left: 8px; gap: 8px; }
.light { width: 12px; height: 12px; border-radius: 50%; background: #f9b32f; }
.red { background: radial-gradient(circle, #4a0a08 0 2px, #ee5754 2.500px); }
.green { background: #1ec133; }
.title { display: flex; align-items: center; height: 18px; line-height: 18px; margin-left: 448px; font-size: 13px; white-space: nowrap; }
.file { margin-left: 6px; letter-spacing: -.1px; }
.saved { margin: 0 5px 0 5px; color: #929194; letter-spacing: -.1px; }
.toolbar { display: grid; grid-template-columns: 46px 23px 44px 44px 33px 80px 30px 70px 30px 34px 56px 42px 40px 28px 40px 29px 33px 36px 50px 52px 57px 33px 44px 60px 26px 40px 36px 30px 40px 30px 40px; height: 46px; }
.tool { display: flex; flex-direction: column; align-items: center; font-size: 10.500px; line-height: 14px; letter-spacing: -.18px; }
.tool span { white-space: nowrap; margin-top: -1.500px; }
.dim span { color: #7e7d80; }

.body { flex: 1; display: flex; min-height: 0; }
.sidebar { width: 279px; flex: none; border-right: 1px solid #b9b9b9; display: flex; flex-direction: column; font-size: 11.500px; background: #eee; }
.head { height: 26px; flex: none; display: flex; align-items: center; justify-content: space-between; padding: 0 7px 0 10px; background: #f4f3f5; border-bottom: 1px solid #bbb; }
.pages { font-weight: 500; font-size: 11px; }
.head.sub { height: 25px; color: #757577; padding-right: 5px; border-top: 1px solid #bbb; font-size: 11px; }
.page { height: 27px; line-height: 28px; flex: none; padding-left: 27px; font-weight: 500; font-size: 11px; }
.selected { background: #5b8edf; color: #fff; font-weight: 400; }
.filler { height: 29px; flex: none; background: #eaeaea; }
.layers { flex: 1; overflow: hidden; min-height: 0; }
.layer-stack { margin-top: -6px; }
.layer { height: 27px; display: flex; align-items: center; gap: 8px; padding-left: 61px; font-weight: 500; font-size: 11px; letter-spacing: .03px; box-sizing: border-box; }
.layer:nth-child(even) { background: #e9e9ea; }
.layer.group { padding-left: 40px; gap: 5px; }
.layer.deep { padding-left: 77px; }
.layer.selected { background: #5b8edf; font-weight: 400; }
.bar { width: 14px; height: 2.500px; background: #999; margin-top: -1px; }
.ring { width: 12px; height: 12px; border: 1.300px solid #e9f1ff; border-radius: 50%; }
.filter { height: 30px; flex: none; display: flex; align-items: center; gap: 13px; padding-left: 5px; background: #f1f1f2; }
.field { width: 217px; height: 16px; border: 1px solid #bfbfc1; border-radius: 3px; background: #fbfbfb; display: flex; align-items: center; gap: 4px; color: #b5b5b8; font-size: 11px; box-sizing: content-box; text-indent: 0; }
.field svg { margin-left: 79px; }
.flags text { font-size: 10px; font-weight: 600; fill: #2f7ae0; }

.canvas { flex: none; display: block; }
.board rect { fill: #fff; stroke: #c4c4c8; stroke-width: 1; filter: drop-shadow(0 2px 2px rgba(0, 0, 0, .22)); }
.board-name { font-size: 11px; fill: #757579; }
.st { font-size: 8.700px; }
.thin { font-weight: 300; }

.inspector { width: 214px; margin-left: -1px; position: relative; flex: none; border-left: 1px solid #b5b5b7; box-sizing: border-box; background: #e2e2e3; display: flex; flex-direction: column; font-size: 11px; font-weight: 500; }
.align { height: 26px; flex: none; background: #f0eff1; border-bottom: 1px solid #c5c5c7; }
.grid { display: grid; grid-template-columns: 55px 59px 67px; column-gap: 8px; padding-left: 7px; margin-top: 8px; grid-template-rows: 35px 35px 44px; }
.cell, .orient { display: flex; flex-direction: column; }
.cell { width: 59px; }
.cell:nth-child(3n) { margin-left: 8px; }
.cell b { height: 17px; line-height: 18px; background: #fff; border: 1px solid #c0c0c2; padding-left: 3px; font-weight: 400; font-size: 11.500px; }
small { font-size: 9px; text-align: center; line-height: 14px; }
.lab { line-height: 20px; }
.custom { font-weight: 600; grid-column: 1 / 3; padding: 4px 0 0 2px; line-height: 20px; }
.custom svg { margin: 0 0 2px 4px; }
.orient { width: 59px; margin-left: 8px; padding-top: 4px; }
.seg { width: 58px; height: 18px; display: flex; border-radius: 4px; overflow: hidden; background: #fff; box-shadow: 0 0 0 .5px #aaa; margin-bottom: 1px; }
.seg i { flex: 1; display: flex; align-items: center; justify-content: center; }
.seg .on { background: linear-gradient(#58a5fb, #1769ef); }
.seg u { width: 11px; height: 8px; background: #1c1c1c; }
.seg .on u { width: 8px; height: 11px; background: #fff; }
.opt { display: flex; align-items: center; gap: 5px; padding-left: 7px; flex: none; box-sizing: border-box; font-size: 11.150px; }
.first { border-top: 1px solid #d0d0d2; height: 32px; }
.second { border-top: 1px solid #c8c8ca; height: 31px; }
.include { color: #9c9c9e; padding-left: 25px; height: 9px; font-weight: 400; }
.check { width: 11px; height: 11px; border: 1px solid #bbb; border-radius: 2.500px; background: #fcfcfc; display: flex; align-items: center; justify-content: center; box-sizing: border-box; }
.second .check, .first .check { width: 12px; height: 12px; }
.swatch { margin: 3px 10px 0 auto; width: 32px; height: 19px; box-sizing: border-box; border: 3px solid #fff; border-radius: 3px; background: #fff; box-shadow: 0 0 0 1px #b9b9bb, inset 0 0 0 1px #ddd; }
.export { margin-top: auto; height: 30px; flex: none; display: flex; align-items: center; justify-content: space-between; padding: 0 7px; background: #ededee; border-top: 1px solid #c9c9cb; font-weight: 600; font-size: 11.200px; color: #39393b; }

.dock-area { flex: 1; display: flex; padding-left: 37px; }
.dock { width: 1206px; border-radius: 4px 4px 0 0; background: linear-gradient(90deg, #776267, #82696d 25%, #8a6b70 38%, #7c656f 60%, #83686f 80%, #776269); display: flex; padding-left: 3.500px; box-sizing: border-box; }
.app { width: 47.100px; height: 59px; flex: none; position: relative; display: flex; justify-content: center; padding-top: 8px; box-sizing: border-box; }
.app i { position: absolute; bottom: 2px; left: 21.500px; width: 4px; height: 4px; border-radius: 50%; background: #18090d; }
.rule { width: 1px; height: 42px; margin: 8px 10px 0 9px; background: #5b484d; }

.hud { position: absolute; left: 478px; top: 675px; width: 324px; height: 86px; border-radius: 12px; overflow: hidden; background: rgba(26, 26, 26, .75); box-shadow: inset 0 0 0 1px rgba(20, 20, 20, .5); }
.hud svg { display: block; filter: drop-shadow(0 1px 2px rgba(0, 0, 0, .6)); }
.hud text { font-size: 61px; font-weight: 500; fill: #fff; }
</style>
